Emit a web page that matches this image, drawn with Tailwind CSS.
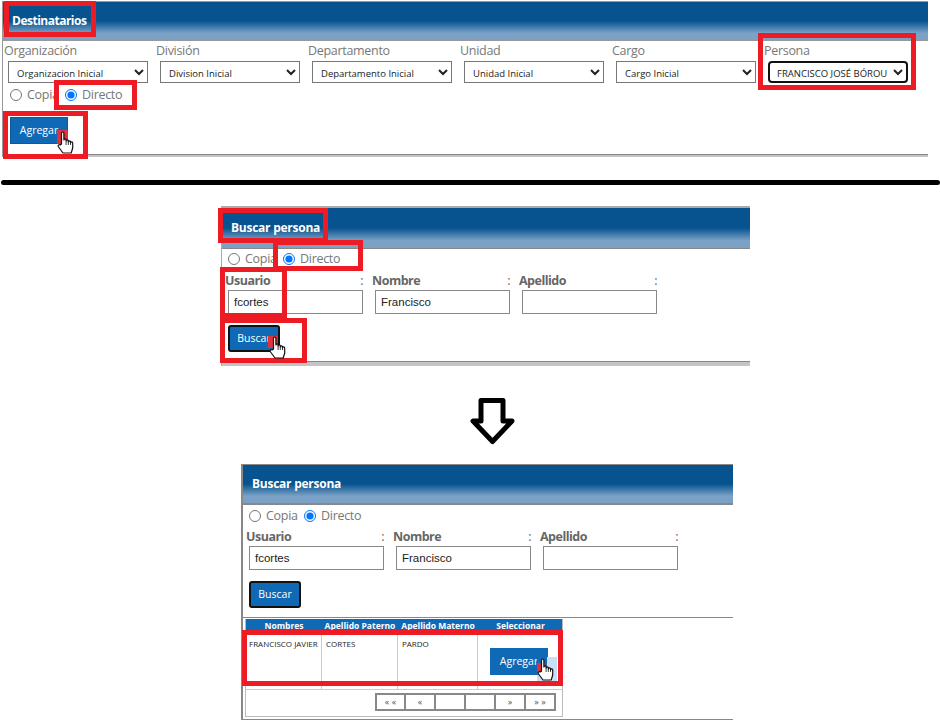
<!DOCTYPE html>
<html lang="es">
<head>
  <meta charset="UTF-8" />
  <title>Destinatarios</title>
  <script src="https://cdn.jsdelivr.net/npm/@tailwindcss/browser@4"></script>
</head>
<body class="bg-white">
<div class="relative w-[940px] h-[724px] overflow-hidden bg-white font-['Open_Sans',sans-serif] pt-px">

  <!-- Destinatarios -->
  <section class="ml-[2px] w-[926px] h-[156px] flex flex-col border-t border-l border-[#999]">
    <div class="h-[39px] shrink-0 flex items-center pl-[9px] text-[12px] tracking-[-0.5px] font-bold text-white border-b border-[#999] bg-[linear-gradient(#07538f_0%,#07538f_50%,#7ba2c6_82%,#7ba2c6_100%)]">Destinatarios</div>
    <div class="grow">
      <div class="grid grid-cols-[152px_152px_152px_152px_152px_152px] pl-px">
        <div>
          <div class="h-[20px] leading-[20px] text-[12.5px] tracking-[-0.3px] text-[#777]">Organización</div>
          <select class="block ml-1 w-[140px] h-[22px] pl-[4px] pt-[3px] text-[9.5px] text-[#222] border border-[#777] bg-white"><option>Organizacion Inicial</option></select>
        </div>
        <div>
          <div class="h-[20px] leading-[20px] text-[12.5px] tracking-[-0.3px] text-[#777]">División</div>
          <select class="block ml-1 w-[140px] h-[22px] pl-[4px] pt-[3px] text-[9.5px] text-[#222] border border-[#777] bg-white"><option>Division Inicial</option></select>
        </div>
        <div>
          <div class="h-[20px] leading-[20px] text-[12.5px] tracking-[-0.3px] text-[#777]">Departamento</div>
          <select class="block ml-1 w-[140px] h-[22px] pl-[4px] pt-[3px] text-[9.5px] text-[#222] border border-[#777] bg-white"><option>Departamento Inicial</option></select>
        </div>
        <div>
          <div class="h-[20px] leading-[20px] text-[12.5px] tracking-[-0.3px] text-[#777]">Unidad</div>
          <select class="block ml-1 w-[140px] h-[22px] pl-[4px] pt-[3px] text-[9.5px] text-[#222] border border-[#777] bg-white"><option>Unidad Inicial</option></select>
        </div>
        <div>
          <div class="h-[20px] leading-[20px] text-[12.5px] tracking-[-0.3px] text-[#777]">Cargo</div>
          <select class="block ml-1 w-[140px] h-[22px] pl-[4px] pt-[3px] text-[9.5px] text-[#222] border border-[#777] bg-white"><option>Cargo Inicial</option></select>
        </div>
        <div>
          <div class="h-[20px] leading-[20px] text-[12.5px] tracking-[-0.3px] text-[#777]">Persona</div>
          <select class="block ml-1 w-[140px] h-[22px] pl-[3px] pt-[3px] text-[9.5px] text-[#222] border-2 border-[#111] rounded-[4px] bg-white"><option>FRANCISCO JOSÉ BÓROU</option></select>
        </div>
      </div>
      <div class="flex items-center h-[20px] mt-[2px] pl-[7px] text-[12.5px] tracking-[-0.3px] text-[#777]">
        <input type="radio" name="d1" class="m-0 w-[12px] h-[12px]" />
        <span class="ml-[5px] w-[38px]">Copia</span>
        <input type="radio" name="d1" checked class="m-0 w-[12px] h-[12px]" />
        <span class="ml-[5px]">Directo</span>
      </div>
      <button class="block mt-[12px] ml-[7px] w-[58px] h-[27px] text-[10.500px] text-white bg-[#1069b4] border border-[#0d5a9a]">Agregar</button>
    </div>
    <div class="h-[3px] shrink-0 border-t border-[#888] bg-[#c4c4c4]"></div>
  </section>

  <div class="mt-[23px] ml-px w-[939px] h-[5px] rounded-full bg-black"></div>

  <!-- Buscar persona -->
  <section class="mt-[21px] ml-[221px] w-[529px] h-[160px] flex flex-col border-t-2 border-l border-[#aaa]">
    <div class="h-[41px] shrink-0 flex items-center pl-[9px] text-[12px] tracking-[-0.25px] font-bold text-white border-b border-[#888] bg-[linear-gradient(#07538f_0%,#07538f_50%,#7ba2c6_82%,#7ba2c6_100%)]">Buscar persona</div>
    <div class="grow">
      <div class="flex items-center h-[20px] pl-[6px] text-[12.5px] tracking-[-0.3px] text-[#777]">
        <input type="radio" name="d2" class="m-0 w-[12px] h-[12px]" />
        <span class="ml-[5px] w-[38px]">Copia</span>
        <input type="radio" name="d2" checked class="m-0 w-[12px] h-[12px]" />
        <span class="ml-[5px]">Directo</span>
      </div>
      <div class="grid grid-cols-[147px_147px_147px] pl-[3px] mt-[2px]">
        <div>
          <div class="flex justify-between w-[138px] h-[19px] leading-[20px] text-[12.5px] tracking-[-0.5px] font-bold text-[#666]"><span>Usuario</span><span class="font-normal">:</span></div>
          <input value="fcortes" class="block ml-[3px] w-[135px] h-[24px] pl-[5px] font-['Liberation_Sans',sans-serif] text-[11.5px] text-[#222] border border-[#888]" />
        </div>
        <div>
          <div class="flex justify-between w-[138px] h-[19px] leading-[20px] text-[12.5px] tracking-[-0.5px] font-bold text-[#666]"><span>Nombre</span><span class="font-normal">:</span></div>
          <input value="Francisco" class="block ml-[3px] w-[135px] h-[24px] pl-[5px] font-['Liberation_Sans',sans-serif] text-[11.5px] text-[#222] border border-[#888]" />
        </div>
        <div>
          <div class="flex justify-between w-[138px] h-[19px] leading-[20px] text-[12.5px] tracking-[-0.5px] font-bold text-[#666]"><span>Apellido</span><span class="font-normal">:</span></div>
          <input class="block ml-[3px] w-[135px] h-[24px] border border-[#888]" />
        </div>
      </div>
      <button class="block mt-[11px] ml-[6px] w-[52px] h-[27px] text-[10.500px] text-white bg-[#1069b4] border-2 border-[#111] rounded-[3px]">Buscar</button>
    </div>
    <div class="h-[5px] shrink-0 border-t border-[#888] bg-[#c4c4c4]"></div>
  </section>

  <svg class="block mt-[32px] ml-[470px] w-[45px] h-[47px]" viewBox="0 0 45 47" fill="none" stroke="#000" stroke-width="5" stroke-linejoin="round">
    <path d="M11 2.5H33V23H42L22.5 43.500L3 23H11Z" />
  </svg>

  <!-- Buscar persona, resultados -->
  <section class="mt-[19px] ml-[241px] w-[492px] h-[256px] flex flex-col border-t border-l-2 border-b border-[#888]">
    <div class="h-[40px] shrink-0 flex items-center pl-[9px] text-[12px] tracking-[-0.25px] font-bold text-white border-b-2 border-[#888] bg-[linear-gradient(#07538f_0%,#07538f_50%,#7ba2c6_82%,#7ba2c6_100%)]">Buscar persona</div>
    <div class="flex items-center h-[20px] mt-[1px] pl-[6px] text-[12.5px] tracking-[-0.3px] text-[#777]">
      <input type="radio" name="d3" class="m-0 w-[12px] h-[12px]" />
      <span class="ml-[5px] w-[38px]">Copia</span>
      <input type="radio" name="d3" checked class="m-0 w-[12px] h-[12px]" />
      <span class="ml-[5px]">Directo</span>
    </div>
    <div class="grid grid-cols-[147px_147px_147px] pl-[3px] mt-[1px]">
      <div>
        <div class="flex justify-between w-[138px] h-[19px] leading-[20px] text-[12.5px] tracking-[-0.5px] font-bold text-[#666]"><span>Usuario</span><span class="font-normal">:</span></div>
        <input value="fcortes" class="block ml-[3px] w-[135px] h-[24px] pl-[5px] font-['Liberation_Sans',sans-serif] text-[11.5px] text-[#222] border border-[#888]" />
      </div>
      <div>
        <div class="flex justify-between w-[138px] h-[19px] leading-[20px] text-[12.5px] tracking-[-0.5px] font-bold text-[#666]"><span>Nombre</span><span class="font-normal">:</span></div>
        <input value="Francisco" class="block ml-[3px] w-[135px] h-[24px] pl-[5px] font-['Liberation_Sans',sans-serif] text-[11.5px] text-[#222] border border-[#888]" />
      </div>
      <div>
        <div class="flex justify-between w-[138px] h-[19px] leading-[20px] text-[12.5px] tracking-[-0.5px] font-bold text-[#666]"><span>Apellido</span><span class="font-normal">:</span></div>
        <input class="block ml-[3px] w-[135px] h-[24px] border border-[#888]" />
      </div>
    </div>
    <button class="block mt-[11px] ml-[6px] w-[52px] h-[27px] text-[10.500px] text-white bg-[#1069b4] border-2 border-[#111] rounded-[3px]">Buscar</button>
    <div class="mt-[9px] border-t border-[#888]"></div>
    <div class="mt-px ml-[2px] w-[318px] h-[98px] border-x border-b border-[#bbb]">
      <div class="grid grid-cols-[76px_76px_80px_85px] h-[12px] bg-[#1069b4] text-[8.500px] font-bold text-white text-center leading-[14px]">
        <div>Nombres</div><div>Apellido Paterno</div><div>Apellido Materno</div><div>Seleccionar</div>
      </div>
      <div class="grid grid-cols-[76px_76px_80px_85px] h-[58px] text-[8px] text-[#222]">
        <div class="pl-[3px] pt-[7px] border-r border-[#ccc]">FRANCISCO JAVIER</div>
        <div class="pl-[4px] pt-[7px] border-r border-[#ccc]">CORTES</div>
        <div class="pl-[4px] pt-[7px] border-r border-[#ccc]">PARDO</div>
        <div class="pl-[12px] pt-[17px]">
          <button class="w-[58px] h-[27px] text-[10.500px] text-white bg-[#1069b4]">Agregar</button>
        </div>
      </div>
      <div class="flex justify-end pr-[6px] pt-[3px] border-t border-[#ccc]">
        <div class="flex text-[9px] text-[#555] text-center">
          <div class="w-[31px] h-[18px] leading-[14px] border-2 border-[#888]">« «</div>
          <div class="w-[30px] h-[18px] leading-[14px] border-y-2 border-r-2 border-[#888]">«</div>
          <div class="w-[30px] h-[18px] border-y-2 border-r-2 border-[#888]"></div>
          <div class="w-[30px] h-[18px] border-y-2 border-r-2 border-[#888]"></div>
          <div class="w-[30px] h-[18px] leading-[14px] border-y-2 border-r-2 border-[#888]">»</div>
          <div class="w-[30px] h-[18px] leading-[14px] border-y-2 border-r-2 border-[#888]">» »</div>
        </div>
      </div>
    </div>
  </section>

  <!-- red highlights drawn over the screenshots -->
  <div class="absolute left-[4px] top-[1px] w-[92px] h-[36px] border-[5px] border-[#ed1c24]"></div>
  <div class="absolute left-[54px] top-[80px] w-[83px] h-[30px] border-[5px] border-[#ed1c24]"></div>
  <div class="absolute left-[3px] top-[111px] w-[85px] h-[48px] border-[5px] border-[#ed1c24]"></div>
  <div class="absolute left-[758px] top-[33px] w-[158px] h-[57px] border-[5px] border-[#ed1c24]"></div>
  <div class="absolute left-[218px] top-[208px] w-[110px] h-[35px] border-[5px] border-[#ed1c24]"></div>
  <div class="absolute left-[273px] top-[240px] w-[90px] h-[31px] border-[5px] border-[#ed1c24]"></div>
  <div class="absolute left-[220px] top-[267px] w-[67px] h-[51px] border-[5px] border-[#ed1c24]"></div>
  <div class="absolute left-[220px] top-[318px] w-[87px] h-[45px] border-[5px] border-[#ed1c24]"></div>
  <div class="absolute left-[242px] top-[630px] w-[321px] h-[56px] border-[5px] border-[#ed1c24]"></div>

  <!-- cursors -->
  <div class="absolute left-[57px] top-[130px] w-[11px] h-[14px] bg-[#e0323c]"></div>
  <svg class="absolute left-[57px] top-[131px] w-[18px] h-[23px]" viewBox="0 0 18 23" fill="#fff" stroke="#111" stroke-width="1.2" stroke-linejoin="round">
    <path d="M4.5 13V2.2a1.2 1.2 0 0 1 2.4 0V9a1.1 1.1 0 0 1 2.2 0v1a1.1 1.1 0 0 1 2.2 0v1a1.1 1.1 0 0 1 2.2 0v1a1.1 1.1 0 0 1 2.2 0v5l-1.500 5H6L1.200 15.500a1.300 1.300 0 0 1 2-1.500Z" />
    <path d="M9.100 10v4M11.300 11v3M13.500 12v2" fill="none" stroke-width="0.800" />
  </svg>
  <div class="absolute left-[268px] top-[336px] w-[10px] h-[12px] bg-[#e0323c]"></div>
  <svg class="absolute left-[269px] top-[336px] w-[18px] h-[23px]" viewBox="0 0 18 23" fill="#fff" stroke="#111" stroke-width="1.2" stroke-linejoin="round">
    <path d="M4.5 13V2.2a1.2 1.2 0 0 1 2.4 0V9a1.1 1.1 0 0 1 2.2 0v1a1.1 1.1 0 0 1 2.2 0v1a1.1 1.1 0 0 1 2.2 0v1a1.1 1.1 0 0 1 2.2 0v5l-1.500 5H6L1.200 15.500a1.300 1.300 0 0 1 2-1.500Z" />
    <path d="M9.100 10v4M11.300 11v3M13.500 12v2" fill="none" stroke-width="0.800" />
  </svg>
  <div class="absolute left-[537px] top-[657px] w-[20px] h-[24px] bg-[#c8dff5]"></div>
  <div class="absolute left-[537px] top-[657px] w-[10px] h-[18px] bg-[#1069b4]"></div>
  <div class="absolute left-[537px] top-[663px] w-[8px] h-[12px] bg-[#e0323c]"></div>
  <svg class="absolute left-[537px] top-[658px] w-[18px] h-[23px]" viewBox="0 0 18 23" fill="#fff" stroke="#111" stroke-width="1.2" stroke-linejoin="round">
    <path d="M4.5 13V2.2a1.2 1.2 0 0 1 2.4 0V9a1.1 1.1 0 0 1 2.2 0v1a1.1 1.1 0 0 1 2.2 0v1a1.1 1.1 0 0 1 2.2 0v1a1.1 1.1 0 0 1 2.2 0v5l-1.500 5H6L1.200 15.500a1.300 1.300 0 0 1 2-1.500Z" />
    <path d="M9.100 10v4M11.300 11v3M13.500 12v2" fill="none" stroke-width="0.800" />
  </svg>
</div>
</body>
</html>
